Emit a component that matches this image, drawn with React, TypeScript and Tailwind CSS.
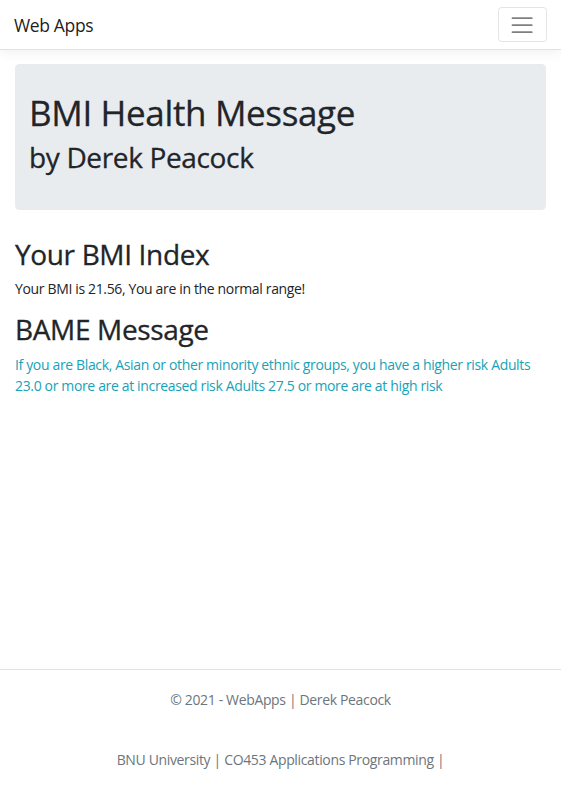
const font = "font-['Open_Sans','Noto_Sans',sans-serif]";

const NavBar = () => (
  <nav className="bg-white border-b border-[#dee2e6] shadow-[0_3.5px_10.5px_rgba(0,0,0,0.05)] px-[14px] py-[7px] flex items-center justify-between">
    <a className="text-[17.5px] leading-[26.25px] py-[4.375px] text-[rgba(0,0,0,0.9)]">Web Apps</a>
    <button className="border border-[rgba(0,0,0,0.1)] rounded-[3.5px] px-[10.5px] py-[3.5px] flex items-center">
      <svg width="26.25" height="26.25" viewBox="0 0 30 30">
        <path
          d="M4 7h22M4 15h22M4 23h22"
          stroke="rgba(0,0,0,0.5)"
          strokeWidth="2"
          strokeLinecap="round"
          strokeMiterlimit="10"
        />
      </svg>
    </button>
  </nav>
);

export default function App() {
  return (
    <div className={`min-h-screen flex flex-col bg-white text-[#212529] text-[14px] leading-[21px] tracking-[-0.025em] ${font}`}>
      <NavBar />

      <main className="flex-1 px-[15px] pt-[14px] pb-[14px]">
        {/* Jumbotron */}
        <div className="bg-[#e9ecef] rounded-[4.2px] px-[14px] py-[28px] mb-[28px]">
          <h1 className="text-[35px] leading-[42px] font-medium [-webkit-text-stroke:0.3px_#212529] mb-[7px]">BMI Health Message</h1>
          <h2 className="text-[28px] leading-[33.6px] font-medium [-webkit-text-stroke:0.3px_#212529] mb-[7px]">by Derek Peacock</h2>
        </div>

        <h2 className="text-[28px] leading-[33.6px] font-medium [-webkit-text-stroke:0.3px_#212529] mb-[7px]">Your BMI Index</h2>
        <p className="mb-[14px]">Your BMI is 21.56, You are in the normal range!</p>

        <h2 className="text-[28px] leading-[33.6px] font-medium [-webkit-text-stroke:0.3px_#212529] mb-[7px]">BAME Message</h2>
        <p className="mb-[14px] text-[#17a2b8]">
          If you are Black, Asian or other minority ethnic groups, you have a higher risk Adults 23.0 or more are at
          increased risk Adults 27.5 or more are at high risk
        </p>
      </main>

      {/* Footer */}
      <footer className="border-t border-[#dee2e6] text-[#6c757d] text-center leading-[60px] whitespace-nowrap">
        <div>© 2021 - WebApps | Derek Peacock</div>
        <div>BNU University | CO453 Applications Programming | </div>
      </footer>
    </div>
  );
}
